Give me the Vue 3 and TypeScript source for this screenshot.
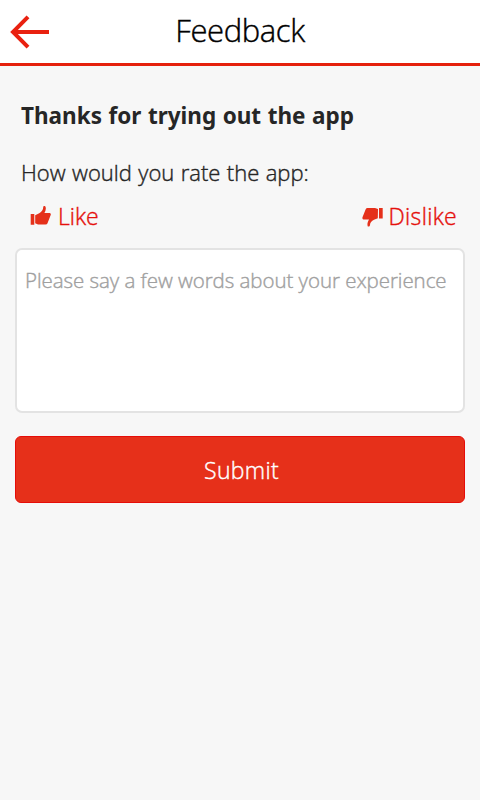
<script setup lang="ts">
import { ref } from 'vue'

const comment = ref('')
</script>

<template>
  <main class="screen">
    <header class="header">
      <button class="back" aria-label="Back">
        <svg width="40" height="34" viewBox="0 0 40 34">
          <path d="M18 1.8 3 17l15 15.2M4 17h35" />
        </svg>
      </button>
      <h1 class="title"><span>Feedback</span></h1>
    </header>
    <form class="content" @submit.prevent>
      <h2 class="thanks"><span>Thanks for trying out the app</span></h2>
      <p class="question"><span>How would you rate the app:</span></p>
      <div class="ratings">
        <button type="button" class="rate">
          <svg width="21" height="21" viewBox="0 0 21 21">
            <path d="M.7 8H4.3V18.8H.7ZM5.2 9.2 9.2 7.2Q13.3 4.6 13.2 1Q14-.8 15.2.3Q16.8 2.5 14.4 7H19.8Q21 7.2 20.8 8.8L17.5 17.2Q17 18.6 15.5 18.6H8L5.2 17.2Z" />
          </svg>
          <span class="like">Like</span>
        </button>
        <button type="button" class="rate dislike">
          <svg width="21" height="21" viewBox="0 0 21 21">
            <path d="M17 2H20.7V12.5H17ZM16 3 13 2H5.5Q4.2 2 3.7 3.2L.4 11.5Q.2 13.4 1.4 13.4H7Q4.6 17.5 5.8 20.4Q7.8 21 8 19Q8.2 15.5 12 13.8L15.8 12.3Z" />
          </svg>
          <span>Dislike</span>
        </button>
      </div>
      <textarea v-model="comment" class="comment" placeholder="Please say a few words about your experience"></textarea>
      <button type="submit" class="submit"><span>Submit</span></button>
    </form>
  </main>
</template>

<style>
body {
  background: #f7f7f7;
}
</style>

<style scoped>
.screen {
  box-sizing: border-box;
  min-height: 800px;
  background: #f7f7f7;
  color: #262626;
  font-family: "Open Sans", "Noto Sans", sans-serif;
  font-weight: 300;
}
.title,
.question,
.rate,
.comment,
.submit {
  -webkit-text-stroke: 0.4px currentColor;
}
button {
  padding: 0;
  border: 0;
  background: none;
  font: inherit;
}
.header {
  box-sizing: border-box;
  height: 66px;
  display: grid;
  grid-template-columns: 50px 1fr 50px;
  background: #fff;
  border-bottom: 3px solid #e5200c;
}
.back {
  padding: 15px 0 0 10px;
  display: flex;
}
.back path {
  fill: none;
  stroke: #e92110;
  stroke-width: 4;
}
.title {
  margin: 0;
  color: #000;
  font-size: 31px;
  font-weight: 300;
  line-height: 60px;
  text-align: center;
  letter-spacing: -0.4px;
}
.content {
  padding: 35px 15px 0;
}
.thanks,
.question {
  margin: 0;
  padding-left: 6px;
  line-height: 30px;
  white-space: nowrap;
}
.thanks {
  font-family: "Noto Sans", "Open Sans", sans-serif;
  font-size: 22.5px;
  font-weight: 700;
  word-spacing: 0.7px;
}
.question {
  margin-top: 26px;
  font-size: 22px;
  word-spacing: 0.7px;
}
.ratings {
  display: flex;
  justify-content: space-between;
  height: 30px;
  margin: 14px 0 17px;
  padding: 0 8px 0 15px;
}
.rate {
  display: flex;
  align-items: center;
  gap: 7px;
  color: #e5100c;
  font-size: 23px;
  line-height: 30px;
}
.rate svg {
  fill: #e5301a;
}
.dislike {
  gap: 6px;
  letter-spacing: 0.3px;
}
.comment {
  box-sizing: border-box;
  display: block;
  width: 450px;
  height: 165px;
  padding: 15px 8px;
  border: 2px solid #e3e3e3;
  border-radius: 7px;
  background: #fff;
  font: 300 20.5px/30px "Open Sans", "Noto Sans", sans-serif;
  letter-spacing: -0.05px;
  white-space: pre;
  overflow: hidden;
  resize: none;
  outline: none;
}
.comment::placeholder {
  color: #a0a0a0;
}
.submit {
  width: 450px;
  height: 67px;
  margin-top: 23px;
  padding: 0 0 0 3px;
  border: 1px solid #e60c08;
  border-radius: 6px;
  background: #e6301a;
  color: #fff;
  font-size: 23px;
  letter-spacing: 0.3px;
}
</style>
